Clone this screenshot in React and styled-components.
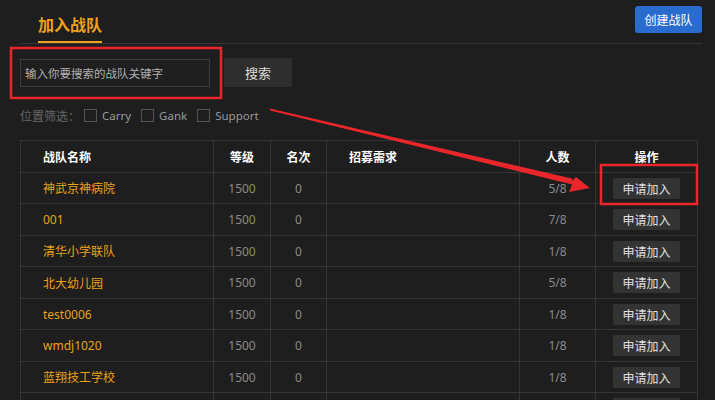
import React, { useState } from 'react';
import styled, { createGlobalStyle } from 'styled-components';

const GlobalStyle = createGlobalStyle`
  html, body {
    margin: 0;
    padding: 0;
    background: #1e1e1e;
  }
  body {
    font-family: "Noto Sans", "Noto Sans CJK SC", sans-serif;
    overflow: hidden;
  }
`;

const Page = styled.div`
  position: relative;
  width: 715px;
  height: 400px;
  overflow: hidden;
  background: #1e1e1e;
  padding: 0 13px 0 20px;
  box-sizing: border-box;
`;

const Header = styled.div`
  display: flex;
  justify-content: space-between;
  align-items: flex-start;
  height: 43px;
  border-bottom: 1px solid #353535;
  box-sizing: content-box;
`;

const Tab = styled.div`
  margin-left: 18px;
  margin-top: 14px;
  height: 29px;
  box-sizing: border-box;
  border-bottom: 2px solid #eda21b;
  color: #eda21b;
  font-size: 16px;
  font-weight: 700;
  line-height: 20px;
  font-family: "Noto Sans CJK SC", sans-serif;
`;

const CreateButton = styled.button`
  margin-top: 6px;
  width: 67px;
  height: 27px;
  border: none;
  border-radius: 3px;
  background: #2a6bd0;
  color: #fff;
  font-size: 12px;
  font-family: "Noto Sans CJK SC", sans-serif;
  padding: 0;
`;

const SearchRow = styled.div`
  display: flex;
  align-items: center;
  gap: 14px;
  margin-top: 14px;
`;

const SearchInput = styled.input`
  width: 190px;
  height: 28px;
  box-sizing: border-box;
  background: #1f1f1f;
  border: 1px solid #3c3c3c;
  color: #ccc;
  font-size: 11.5px;
  padding: 0 4px;
  outline: none;
  font-family: "Noto Sans CJK SC", sans-serif;
  &::placeholder {
    color: #b0b0b0;
  }
`;

const SearchButton = styled.button`
  width: 68px;
  height: 29px;
  border: none;
  background: #2e2e2e;
  color: #dcdcdc;
  font-size: 13px;
  padding: 0;
  font-family: "Noto Sans CJK SC", sans-serif;
`;

const FilterRow = styled.div`
  display: flex;
  align-items: center;
  height: 20px;
  margin-top: 18px;
  font-size: 11.5px;
  color: #999;
`;

const FilterLabel = styled.span`
  color: #666;
  font-size: 12px;
  margin-right: 4px;
  font-family: "Noto Sans CJK SC", sans-serif;
`;

const CheckLabel = styled.label`
  display: flex;
  align-items: center;
  margin-right: 10px;
  color: #9a9a9a;
`;

const Box = styled.span`
  width: 11px;
  height: 11px;
  border: 1px solid #555;
  margin-right: 5px;
  box-sizing: content-box;
`;

const Table = styled.table`
  margin-top: 15px;
  width: 677px;
  border-collapse: collapse;
  table-layout: fixed;
  font-size: 12px;
`;

const Th = styled.th`
  height: 31px;
  padding: 0 0 0 ${(p) => (p.$left ? '22px' : '0')};
  border: 1px solid #353535;
  color: #fff;
  font-weight: 700;
  text-align: ${(p) => (p.$left ? 'left' : 'center')};
  font-family: "Noto Sans CJK SC", sans-serif;
`;

const Row = styled.tr`
  & > td {
    height: ${(p) => (p.$tall ? '31px' : '30px')};
  }
`;

const Td = styled.td`
  padding: 0 0 0 ${(p) => (p.$left ? '22px' : '0')};
  border: 1px solid #353535;
  color: ${(p) => (p.$name ? '#e9a11a' : '#8a8a8a')};
  text-align: ${(p) => (p.$left ? 'left' : 'center')};
  white-space: nowrap;
  font-family: "Noto Sans", "Noto Sans CJK SC", sans-serif;
`;

const JoinButton = styled.button`
  width: 67px;
  height: 21px;
  border: none;
  border-radius: 2px;
  background: #333;
  color: #e0e0e0;
  font-size: 12px;
  padding: 0;
  vertical-align: middle;
  font-family: "Noto Sans CJK SC", sans-serif;
`;

const Annotations = styled.svg`
  position: absolute;
  left: 0;
  top: 0;
  pointer-events: none;
`;

const teams = [
  { name: '神武京神病院', level: 1500, rank: 0, count: '5/8' },
  { name: '001', level: 1500, rank: 0, count: '7/8' },
  { name: '清华小学联队', level: 1500, rank: 0, count: '1/8' },
  { name: '北大幼儿园', level: 1500, rank: 0, count: '5/8' },
  { name: 'test0006', level: 1500, rank: 0, count: '1/8' },
  { name: 'wmdj1020', level: 1500, rank: 0, count: '1/8' },
  { name: '蓝翔技工学校', level: 1500, rank: 0, count: '1/8' },
];

const App = () => {
  const [keyword, setKeyword] = useState('');

  return (
    <>
      <GlobalStyle />
      <Page>
        <Header>
          <Tab>加入战队</Tab>
          <CreateButton>创建战队</CreateButton>
        </Header>

        <SearchRow>
          <SearchInput
            value={keyword}
            onChange={(e) => setKeyword(e.target.value)}
            placeholder="输入你要搜索的战队关键字"
          />
          <SearchButton>搜索</SearchButton>
        </SearchRow>

        <FilterRow>
          <FilterLabel>位置筛选：</FilterLabel>
          <CheckLabel><Box />Carry</CheckLabel>
          <CheckLabel><Box />Gank</CheckLabel>
          <CheckLabel><Box />Support</CheckLabel>
        </FilterRow>

        <Table>
          <colgroup>
            <col style={{ width: 193 }} />
            <col style={{ width: 57 }} />
            <col style={{ width: 56 }} />
            <col style={{ width: 193 }} />
            <col style={{ width: 76 }} />
            <col style={{ width: 102 }} />
          </colgroup>
          <thead>
            <tr>
              <Th $left>战队名称</Th>
              <Th>等级</Th>
              <Th>名次</Th>
              <Th $left>招募需求</Th>
              <Th>人数</Th>
              <Th>操作</Th>
            </tr>
          </thead>
          <tbody>
            {teams.map((t, i) => (
              <Row key={t.name} $tall={i % 2 === 1}>
                <Td $left $name>{t.name}</Td>
                <Td>{t.level}</Td>
                <Td>{t.rank}</Td>
                <Td $left />
                <Td>{t.count}</Td>
                <Td><JoinButton>申请加入</JoinButton></Td>
              </Row>
            ))}
            <Row $tall>
              <Td $left $name />
              <Td />
              <Td />
              <Td $left />
              <Td />
              <Td><JoinButton aria-label="申请加入" /></Td>
            </Row>
          </tbody>
        </Table>

        <Annotations width="715" height="400" viewBox="0 0 715 400">
          <rect x="11" y="48" width="210" height="50" fill="none" stroke="#e8262b" strokeWidth="2.5" />
          <rect x="601" y="165" width="96" height="39" fill="none" stroke="#e8262b" strokeWidth="2.5" />
          <polygon
            points="270,109 271,110.2 572,184.5 569,192 590,188 576,177 572,181 "
            fill="#e8262b"
          />
          <polygon points="270,108.6 572,178.5 572,183.5 270,110.4" fill="#e8262b" />
        </Annotations>
      </Page>
    </>
  );
};

export default App;
